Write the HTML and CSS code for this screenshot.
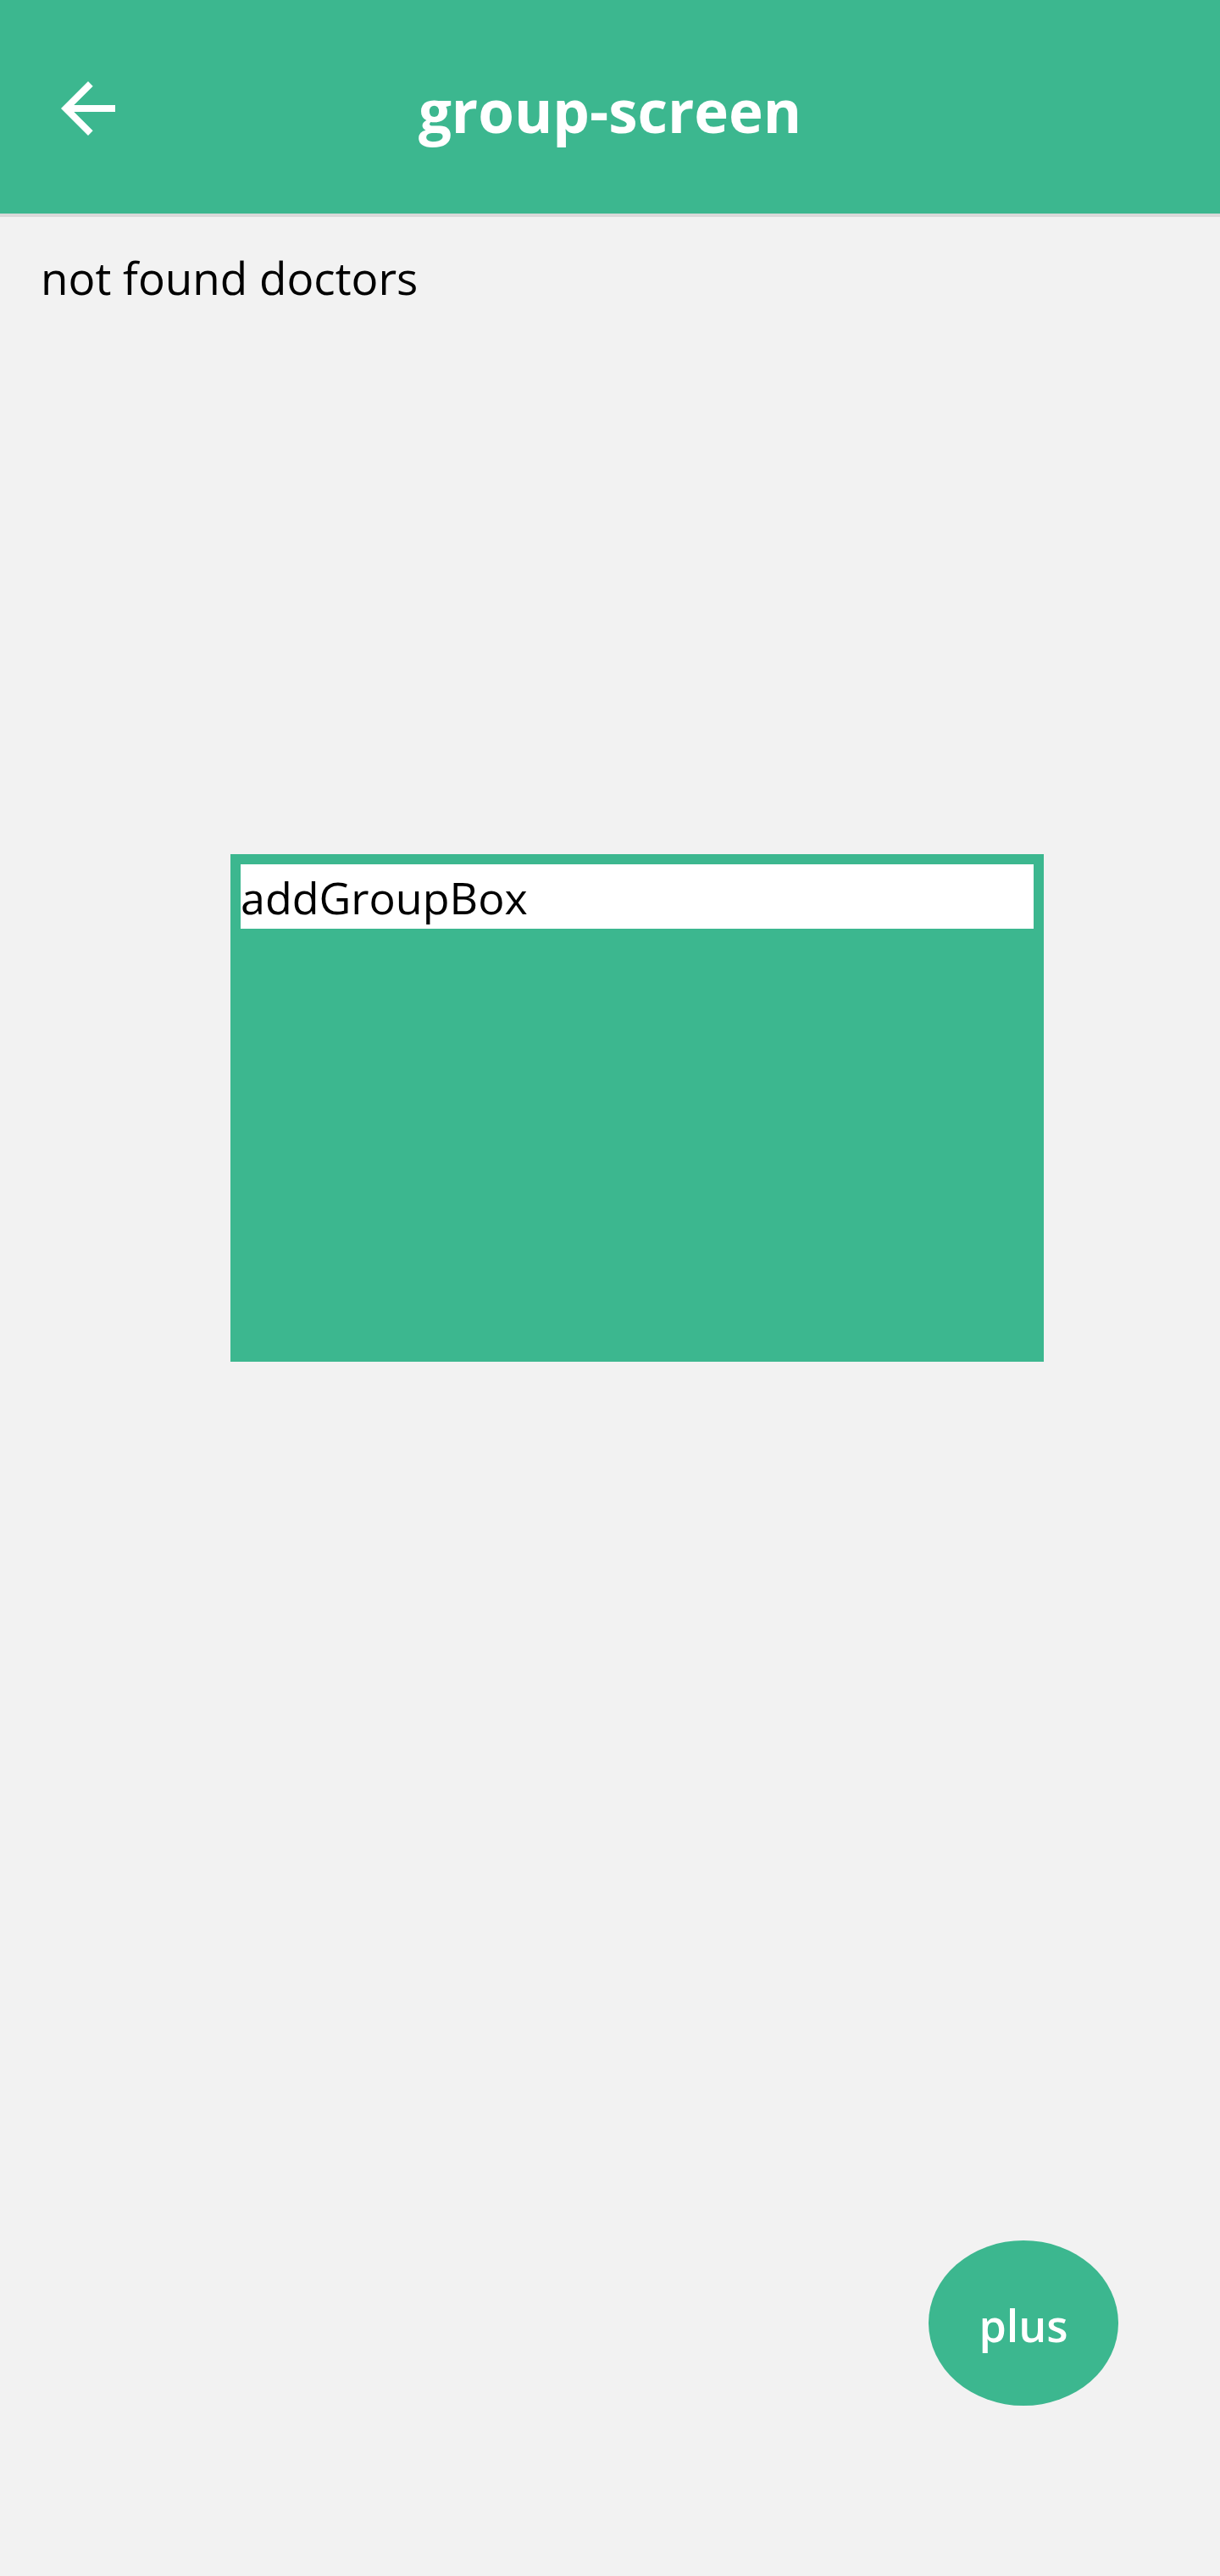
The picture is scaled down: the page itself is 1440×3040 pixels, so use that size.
FILE: index.html
```html
<!DOCTYPE html>
<html lang="en">
<head>
<meta charset="utf-8">
<title>group-screen</title>
<link rel="stylesheet" href="styles.css">
</head>
<body>
<div class="app">
  <header class="topbar">
    <button class="back" aria-label="Back">
      <svg viewBox="0 0 24 24" width="96" height="96"><path fill="#fff" d="M20 11H7.83l5.59-5.59L12 4l-8 8 8 8 1.41-1.41L7.83 13H20v-2z"/></svg>
    </button>
    <h1 class="title">group-screen</h1>
    <span></span>
  </header>
  <main class="content">
    <p class="empty">not found doctors</p>
    <div class="group-box">
      <div class="group-input">addGroupBox</div>
    </div>
  </main>
  <button class="fab">plus</button>
</div>
</body>
</html>
```

FILE: styles.css
```css
html, body {
  margin: 0;
  padding: 0;
}
body {
  background: #f2f2f2;
  font-family: "Open Sans", "Noto Sans", sans-serif;
}
.app {
  position: relative;
  min-height: 3040px;
}
.topbar {
  height: 252px;
  background: #3cb78f;
  border-bottom: 4px solid #d9d9d9;
  display: grid;
  grid-template-columns: 1fr auto 1fr;
  align-items: center;
}
.back {
  justify-self: start;
  margin: 4px 0 0 56px;
  padding: 0;
  border: 0;
  background: none;
  width: 96px;
  height: 96px;
  display: flex;
}
.title {
  margin: 0;
  padding-top: 8px;
  color: #fff;
  font-size: 69px;
  font-weight: 700;
}
.content {
  padding: 36px 0 0 48px;
}
.empty {
  margin: 0;
  font-size: 53px;
  line-height: 72px;
  color: #000;
}
.group-box {
  margin: 644px 0 0 224px;
  width: 936px;
  height: 575px;
  padding: 12px;
  background: #3cb78f;
}
.group-input {
  background: #fff;
  height: 74px;
  padding-top: 2px;
  line-height: 74px;
  font-size: 52px;
  color: #000;
  white-space: nowrap;
}
.fab {
  position: absolute;
  right: 120px;
  top: 2644px;
  width: 224px;
  height: 195px;
  border-radius: 50%;
  border: 0;
  background: #3cb78f;
  color: #fff;
  font-family: "Open Sans", "Noto Sans", sans-serif;
  font-size: 52px;
  font-weight: 600;
  padding: 4px 0 0;
}
```
